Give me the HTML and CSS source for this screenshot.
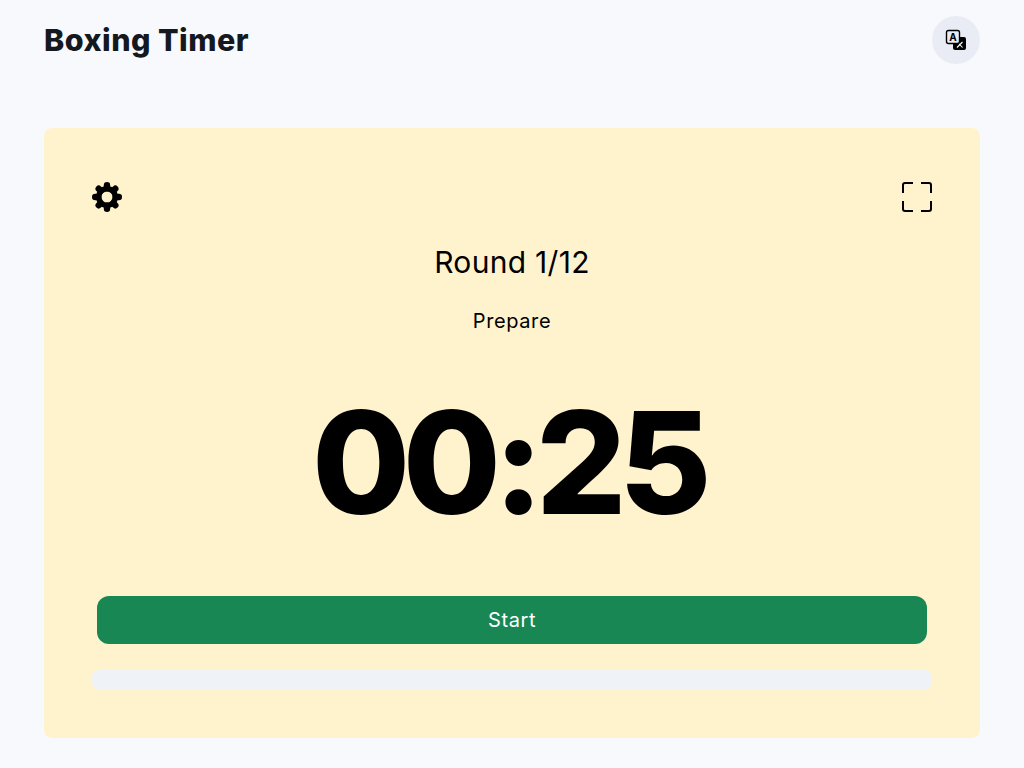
FILE: index.html
```html
<!DOCTYPE html>
<html lang="en">
<head>
    <meta charset="UTF-8">
    <meta name="viewport" content="width=device-width, initial-scale=1.0">
    <title>Boxing Timer</title>
    <link rel="stylesheet" href="styles.css">
</head>
<body>
    <header class="top-bar">
        <h1>Boxing Timer</h1>
        <button class="lang-button" aria-label="Change language">
            <svg width="24" height="24" viewBox="0 0 24 24">
                <rect x="9" y="9" width="13" height="13" rx="2" fill="#000"/>
                <path d="M13 19.500l5.500-5.500M13.500 14l5 5.500" fill="none" stroke="#fff" stroke-width="1.100"/>
                <rect x="2.500" y="2.500" width="13" height="13" rx="2" fill="#e9ecf4" stroke="#000" stroke-width="1.400"/>
                <text x="9" y="12.600" class="lang-letter">A</text>
            </svg>
        </button>
    </header>

    <main class="timer-card">
        <div class="tools">
            <button class="icon-button" aria-label="Settings">
                <svg width="30" height="30" viewBox="0 0 30 30">
                    <circle cx="15" cy="15" r="8.250" fill="none" stroke="#000" stroke-width="5.500"/>
                    <g stroke="#000" stroke-width="6.400" stroke-linecap="round">
                        <path d="M15 3.200v3"/>
                        <path d="M15 23.800v3"/>
                        <path d="M3.200 15h3"/>
                        <path d="M23.800 15h3"/>
                        <path d="M6.700 6.700l2 2"/>
                        <path d="M21.300 21.300l2 2"/>
                        <path d="M6.700 23.300l2-2"/>
                        <path d="M21.300 8.700l2-2"/>
                    </g>
                </svg>
            </button>
            <button class="icon-button" aria-label="Fullscreen">
                <svg width="30" height="30" viewBox="0 0 30 30">
                    <path d="M1 11V3a2 2 0 0 1 2-2h8M19 1h8a2 2 0 0 1 2 2v8M29 19v8a2 2 0 0 1-2 2h-8M11 29H3a2 2 0 0 1-2-2v-8" fill="none" stroke="#000" stroke-width="2"/>
                </svg>
            </button>
        </div>

        <h2 class="round">Round 1/12</h2>
        <p class="phase">Prepare</p>
        <div class="clock">00:25</div>

        <button class="start-button">Start</button>
        <div class="progress"></div>
    </main>
</body>
</html>
```

FILE: styles.css
```css
body {
    background-color: #f8f9fc;
    font-family: Inter, "Open Sans", sans-serif;
    color: #000;
    margin: 0;
    padding: 0 44px;
}

button {
    font-family: inherit;
    border: none;
    padding: 0;
    cursor: pointer;
}

.top-bar {
    display: flex;
    justify-content: space-between;
    align-items: center;
    height: 48px;
    padding-top: 16px;
    margin-bottom: 64px;
}

.top-bar h1 {
    margin: -2px 0 0;
    font-size: 30.500px;
    font-weight: 800;
    letter-spacing: 0.45px;
    color: #14181f;
}

.lang-button {
    width: 48px;
    height: 48px;
    border-radius: 50%;
    background-color: #e9ecf4;
    display: flex;
    align-items: center;
    justify-content: center;
}

.lang-letter {
    font-size: 10px;
    font-weight: 700;
    text-anchor: middle;
    font-family: Inter, sans-serif;
}

.timer-card {
    background-color: #fff3cd;
    border-radius: 8px;
    padding: 54px 48px 48px;
    height: 610px;
    box-sizing: border-box;
    display: flex;
    flex-direction: column;
    align-items: center;
}

.tools {
    display: flex;
    justify-content: space-between;
    width: 100%;
    height: 30px;
}

.icon-button {
    background: none;
    width: 30px;
    height: 30px;
}

.icon-button svg {
    display: block;
}

.round {
    margin: 30px 0 0;
    font-size: 30px;
    line-height: 40px;
    font-weight: 400;
    letter-spacing: 0.3px;
}

.phase {
    margin: 24px 0 0;
    font-size: 20px;
    line-height: 30px;
    letter-spacing: 0.6px;
}

.clock {
    margin: 31px 8px 0 0;
    font-size: 142px;
    line-height: 190px;
    font-weight: 800;
    letter-spacing: -7.500px;
}

.start-button {
    margin-top: 39px;
    width: 830px;
    height: 48px;
    flex-shrink: 0;
    border-radius: 12px;
    background-color: #198754;
    color: #fff;
    font-size: 20px;
    letter-spacing: 0.6px;
}

.progress {
    margin-top: 26px;
    width: 100%;
    height: 20px;
    flex-shrink: 0;
    border-radius: 8px;
    background-color: #eff2f7;
}
```
